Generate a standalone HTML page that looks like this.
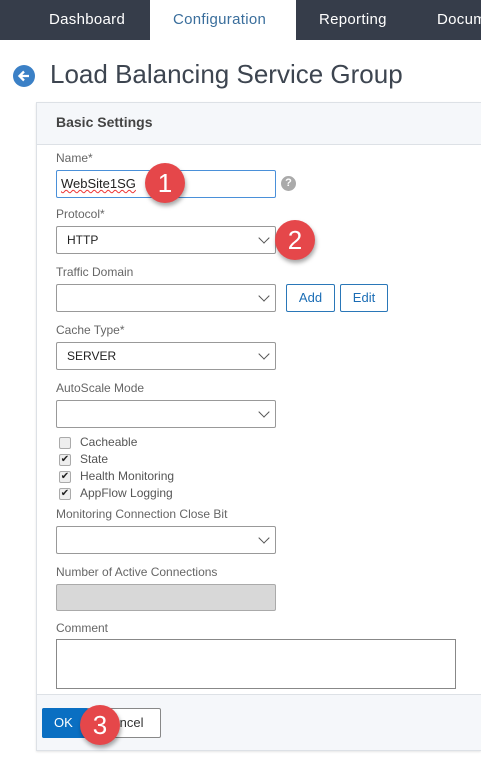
<!DOCTYPE html>
<html><head><meta charset="utf-8"><style>
*{box-sizing:border-box;margin:0;padding:0}
body{width:481px;height:770px;overflow:hidden;background:#fff;font-family:"Liberation Sans",sans-serif;position:relative;color:#333}
.a{position:absolute}
.nav{left:0;top:0;width:481px;height:40px;background:#363d4a}
.tab{top:0;height:40px;line-height:40px;font-size:15px;color:#fff;letter-spacing:.3px}
.lbl{font-size:12px;color:#666;left:56px}
.inp{left:56px;width:220px;height:28px;border:1px solid #999;border-radius:2px;background:#fff;font-size:12px;padding-left:10px;line-height:26px;color:#222}
.chev{position:absolute;right:7px;top:7px;width:8px;height:8px;border-right:1.3px solid #555;border-bottom:1.3px solid #555;transform:rotate(45deg)}
.btn{border:1px solid #2a77b8;border-radius:2px;color:#1b6db5;font-size:13px;text-align:center;line-height:26px;height:28px;background:#fff}
.cb{left:59px;width:12px;height:12px;border:1px solid #aaa;border-radius:2px;background:#eee;font-size:10px;line-height:10px;text-align:center;color:#222}
.cbl{left:80px;font-size:12px;color:#555}
.badge{width:40px;height:40px;border-radius:50%;background:#e5474a;color:#fff;font-size:26px;text-align:center;line-height:40px;box-shadow:1px 3px 4px rgba(0,0,0,.35)}
</style></head><body>
<div class="a nav"></div>
<div class="a" style="left:150px;top:0;width:146px;height:40px;background:#fff"></div>
<div class="a tab" style="left:49px">Dashboard</div>
<div class="a tab" style="left:173px;color:#3a6e9c">Configuration</div>
<div class="a tab" style="left:319px">Reporting</div>
<div class="a tab" style="left:437px;width:44px;overflow:hidden;white-space:nowrap">Documentation</div>
<div class="a" style="left:13px;top:65px;width:22px;height:22px;border-radius:50%;background:#3b80c6"></div>
<svg class="a" style="left:13px;top:65px" width="22" height="22"><path d="M16 11H7M11 6.5L6.5 11L11 15.5" stroke="#fff" stroke-width="2.3" fill="none"/></svg>
<div class="a" style="left:50px;top:59px;font-size:26px;color:#3d4550;white-space:nowrap">Load Balancing Service Group</div>
<div class="a" style="left:36px;top:102px;width:445px;height:649px;border:1px solid #dde1e6;border-right:none;background:#fff;box-shadow:0 1px 2px rgba(0,0,0,.1)"></div>
<div class="a" style="left:37px;top:103px;width:444px;height:42px;background:#f5f7fa;border-bottom:1px solid #dde1e6"></div>
<div class="a" style="left:56px;top:114px;font-size:14px;font-weight:bold;color:#444">Basic Settings</div>
<div class="a lbl" style="top:151px">Name*</div>
<div class="a inp" style="top:170px;border-color:#4a90d9;padding-left:4px;font-size:13px"><span style="text-decoration:underline wavy #e33;text-decoration-thickness:1px">WebSite1SG</span></div>
<div class="a" style="left:281px;top:176px;width:15px;height:15px;border-radius:50%;background:#aaa;color:#fff;font-size:11px;font-weight:bold;text-align:center;line-height:15px">?</div>
<div class="a lbl" style="top:207px">Protocol*</div>
<div class="a inp" style="top:226px">HTTP<span class="chev"></span></div>
<div class="a lbl" style="top:265px">Traffic Domain</div>
<div class="a inp" style="top:284px"><span class="chev"></span></div>
<div class="a btn" style="left:286px;top:284px;width:49px">Add</div>
<div class="a btn" style="left:340px;top:284px;width:48px">Edit</div>
<div class="a lbl" style="top:323px">Cache Type*</div>
<div class="a inp" style="top:342px">SERVER<span class="chev"></span></div>
<div class="a lbl" style="top:381px">AutoScale Mode</div>
<div class="a inp" style="top:400px"><span class="chev"></span></div>
<div class="a cb" style="top:437px"></div><div class="a cbl" style="top:435px">Cacheable</div>
<div class="a cb" style="top:454px">✔</div><div class="a cbl" style="top:452px">State</div>
<div class="a cb" style="top:471px">✔</div><div class="a cbl" style="top:469px">Health Monitoring</div>
<div class="a cb" style="top:488px">✔</div><div class="a cbl" style="top:486px">AppFlow Logging</div>
<div class="a lbl" style="top:507px">Monitoring Connection Close Bit</div>
<div class="a inp" style="top:526px"><span class="chev"></span></div>
<div class="a lbl" style="top:565px">Number of Active Connections</div>
<div class="a inp" style="top:584px;height:27px;background:#d8d8d8;border-color:#aaa"></div>
<div class="a lbl" style="top:621px">Comment</div>
<div class="a" style="left:56px;top:639px;width:400px;height:50px;border:1px solid #888"></div>
<div class="a" style="left:37px;top:694px;width:444px;height:56px;background:#f5f7fa;border-top:1px solid #dde1e6"></div>
<div class="a" style="left:42px;top:708px;width:119px;height:30px;border:1px solid #888;border-radius:2px;background:#fff;font-size:13px;line-height:28px;padding-left:60px;color:#333">Cancel</div>
<div class="a" style="left:42px;top:708px;width:46px;height:30px;background:#0a6fc2;border-radius:2px;color:#fff;font-size:13px;line-height:30px;padding-left:12px">OK</div>
<div class="a badge" style="left:145px;top:163px">1</div>
<div class="a badge" style="left:275px;top:220px">2</div>
<div class="a badge" style="left:80px;top:705px">3</div>
</body></html>
